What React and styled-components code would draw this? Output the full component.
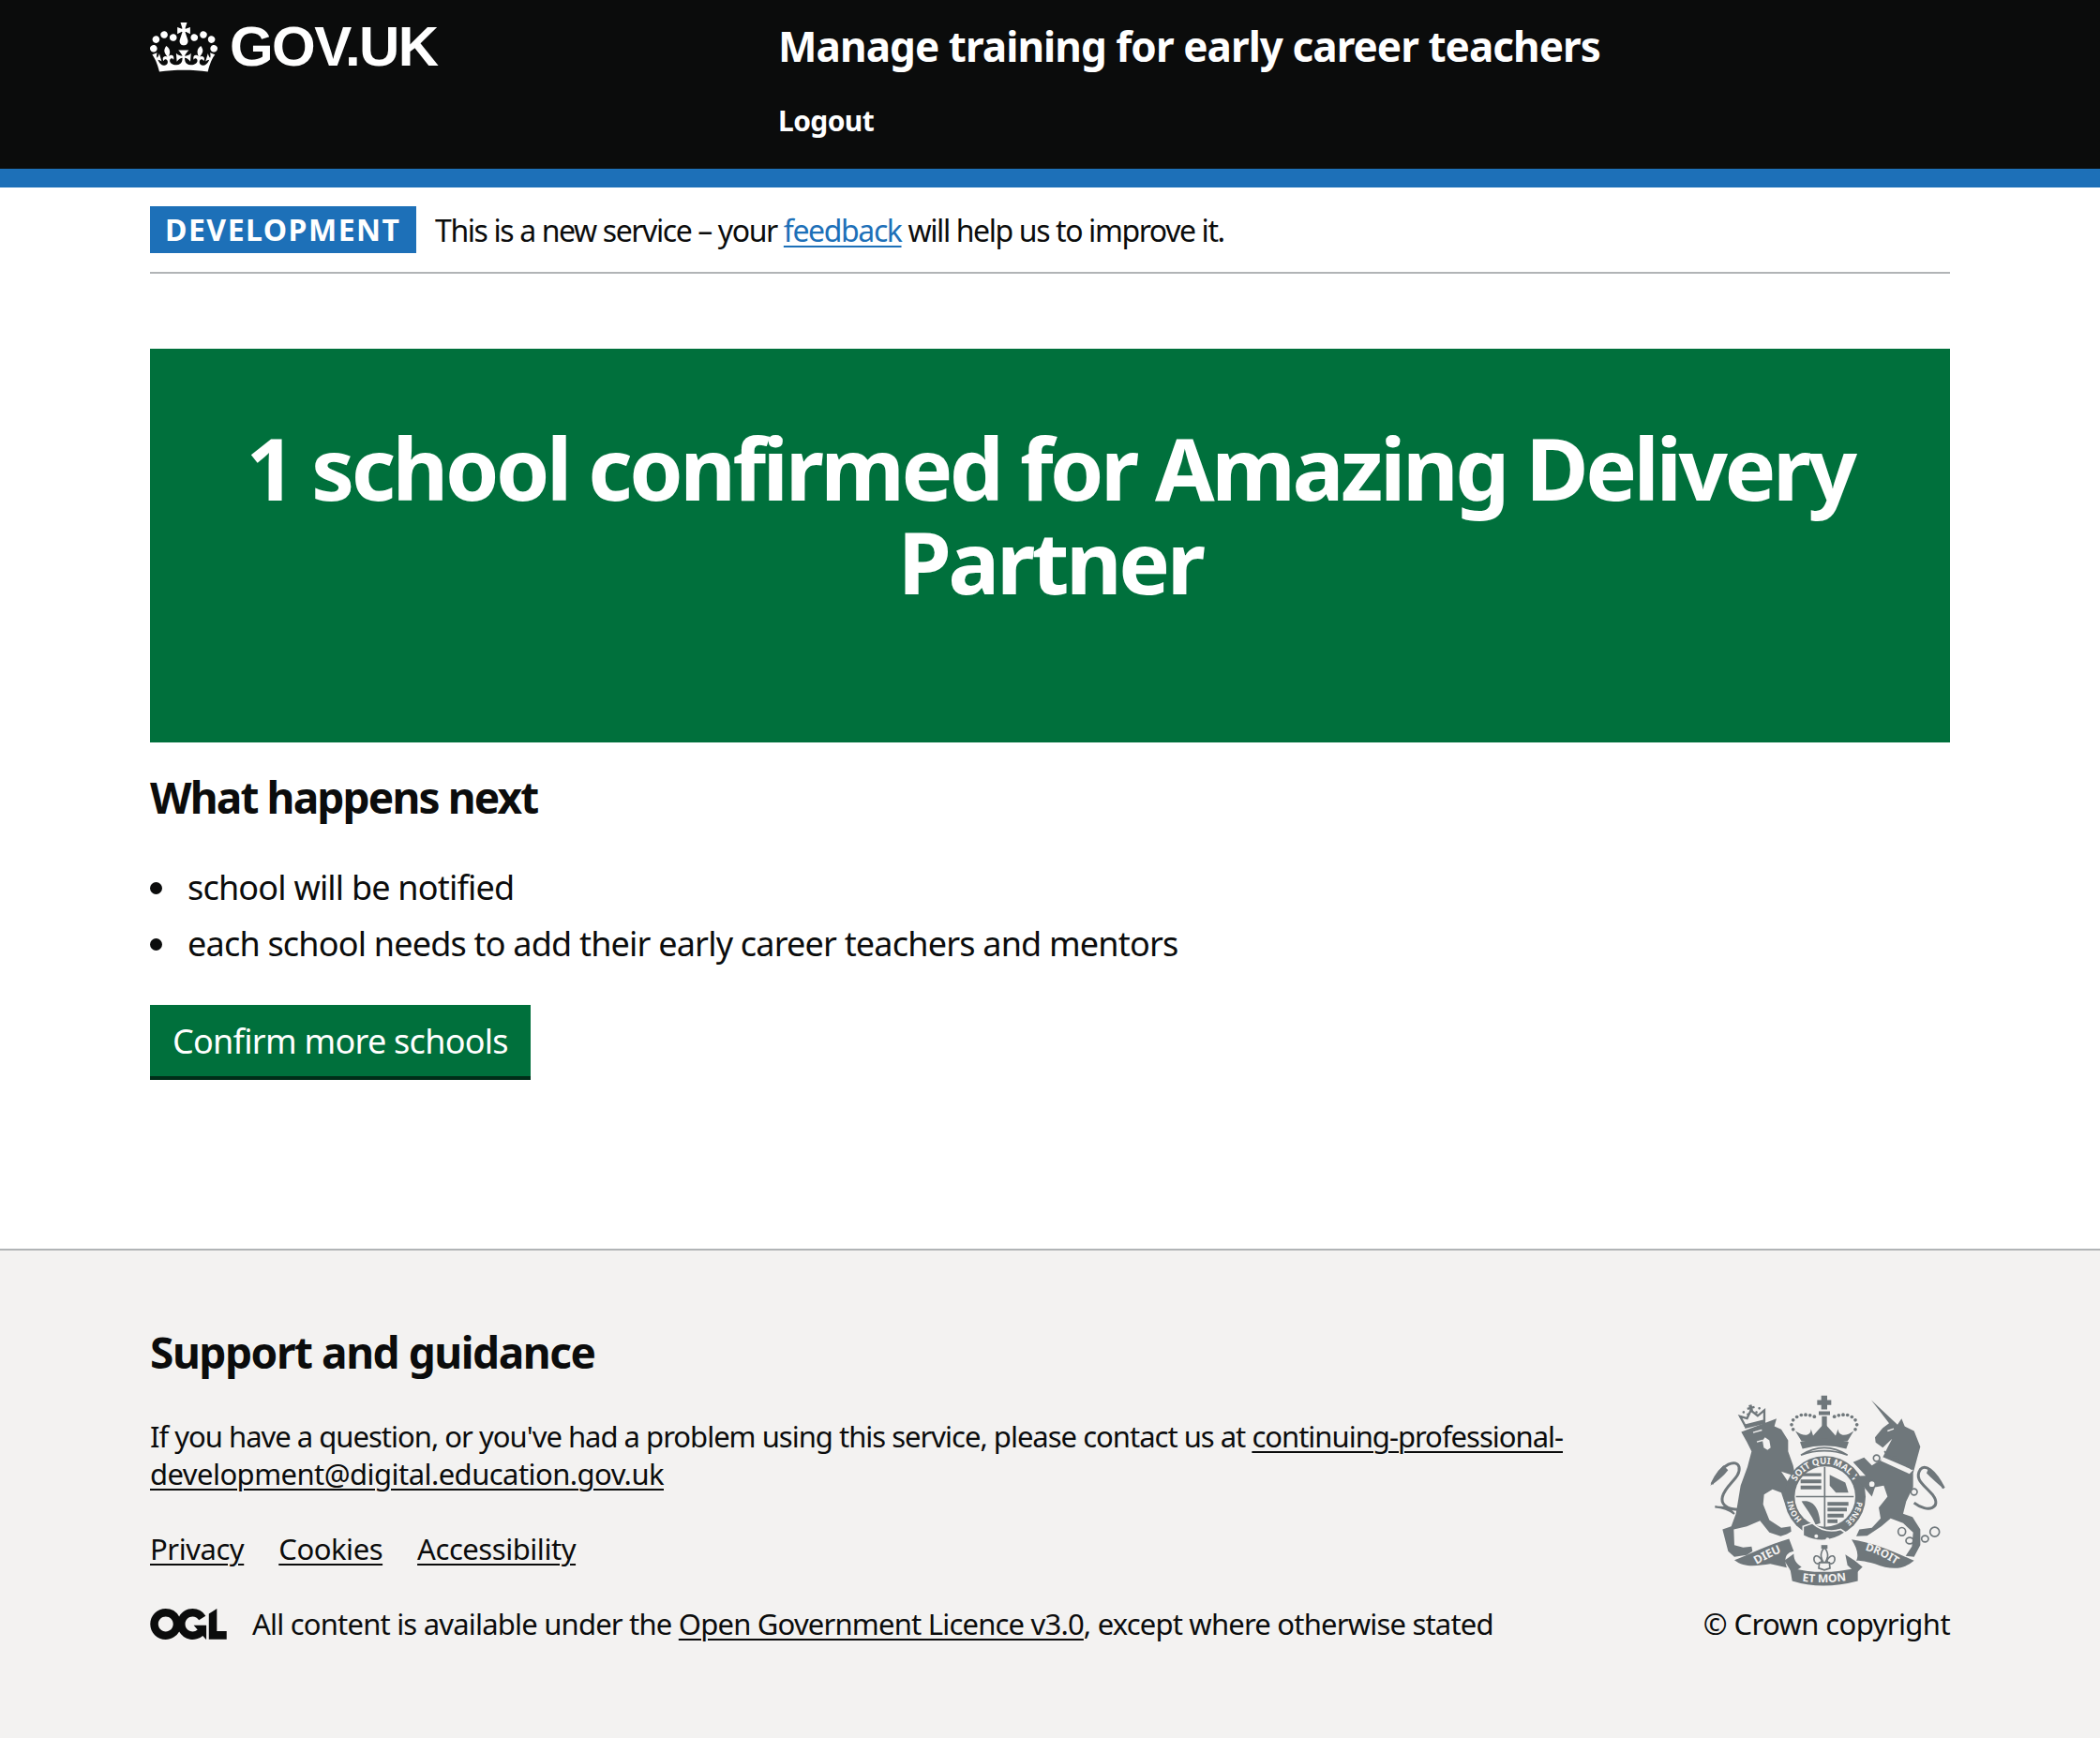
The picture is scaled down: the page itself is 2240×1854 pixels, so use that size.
import React from "react";
import styled, { createGlobalStyle } from "styled-components";

const FONT = '"Noto Sans", "Liberation Sans", Arial, sans-serif';
const Global = createGlobalStyle`
  html, body { margin: 0; padding: 0; background: #fff; }
  body { font-family: ${FONT}; color: #0b0c0c; }
  * { box-sizing: border-box; }
`;
const Page = styled.div`display: flex; flex-direction: column; min-height: 1854px;`;
const Container = styled.div`width: 1920px; margin: 0 auto;`;
const Header = styled.header`background: #0b0c0c; border-bottom: 20px solid #1d70b8; height: 200px; color: #fff;`;
const HeaderInner = styled(Container)`display: flex;`;
const LogoCol = styled.div`width: 670px; display: flex; align-items: center; gap: 13px; height: 100px; align-self: flex-start;`;
const Wordmark = styled.span`font: 700 60px/100px "Liberation Sans", Arial, sans-serif; letter-spacing: -1.6px;`;
const Crown = styled.svg`width: 72px; height: 53px; fill: #fff; flex: none;`;
const HeaderContent = styled.div`display: flex; flex-direction: column;`;
const ServiceName = styled.div`font-weight: 700; font-size: 44px; line-height: 99px; letter-spacing: -0.94px;`;
const HeaderLink = styled.a`font-weight: 700; font-size: 30px; line-height: 60px; letter-spacing: -0.6px; color: #fff;`;
const Banner = styled(Container)`display: flex; align-items: center; gap: 20px; height: 92px; border-bottom: 2px solid #b1b4b6;`;
const Tag = styled.strong`background: #1d70b8; color: #fff; font-weight: 700; font-size: 32px; line-height: 50px; height: 50px; padding: 0 16px; letter-spacing: 1.5px; width: 284px; white-space: nowrap;`;
const BannerText = styled.span`font-size: 32px; letter-spacing: -1.4px;`;
const BlueLink = styled.a`color: #1d70b8; text-decoration: underline; text-decoration-thickness: 2px; text-underline-offset: 4px;`;
const Main = styled(Container)`padding-top: 80px; flex: 1;`;
const Panel = styled.div`background: #00703c; color: #fff; height: 420px; padding: 77px 40px 0; text-align: center;`;
const PanelTitle = styled.h1`margin: 0; font-size: 92px; line-height: 100px; font-weight: 700; letter-spacing: -3.5px;`;
const H2 = styled.h2`margin: 28px 0 0; font-size: 46px; line-height: 60px; font-weight: 700; letter-spacing: -1.85px;`;
const List = styled.ul`margin: 37px 0 0; padding: 0 0 0 40px; list-style: none;`;
const Item = styled.li`
  position: relative; font-size: 36px; line-height: 60px; letter-spacing: -0.8px;
  &::before { content: ""; position: absolute; left: -40px; top: 24px; width: 13px; height: 13px; border-radius: 50%; background: #0b0c0c; }
`;
const Button = styled.a`display: inline-block; margin-top: 35px; background: #00703c; color: #fff; box-shadow: 0 4px 0 #002d18; height: 76px; width: 406px; padding-left: 24px; font-size: 36px; line-height: 78px; letter-spacing: -0.73px;`;
const Footer = styled.footer`background: #f3f2f1; border-top: 2px solid #b1b4b6; height: 522px; padding-top: 78px;`;
const FooterInner = styled(Container)`display: grid; grid-template-columns: 1fr auto; column-gap: 100px;`;
const FooterMain = styled.div`display: flex; flex-direction: column;`;
const FooterTitle = styled.h2`margin: 0 0 40px; font-size: 46px; line-height: 60px; font-weight: 700; letter-spacing: -1.45px;`;
const FooterText = styled.p`margin: 0 0 40px; font-size: 31px; line-height: 40px; letter-spacing: -1px;`;
const DarkLink = styled.a`color: #0b0c0c; text-decoration: underline; text-decoration-thickness: 2px; text-underline-offset: 4px;`;
const WideRun = styled.span`letter-spacing: -0.55px;`;
const FooterLinks = styled.div`display: flex; gap: 37px; font-size: 31px; line-height: 40px; letter-spacing: -0.45px;`;
const Licence = styled.div`display: flex; align-items: center; gap: 27px; margin-top: 40px; font-size: 31px; line-height: 40px; letter-spacing: -0.8px;`;
const Ogl = styled.svg`width: 82px; height: 33px; fill: #0b0c0c; flex: none;`;
const FooterSide = styled.div`display: flex; flex-direction: column; align-items: flex-end; padding-top: 76px;`;
const CrestSvg = styled.svg`width: 260px; height: 207px; display: block; margin-bottom: 17px;`;
const Copy = styled.div`font-size: 31px; line-height: 40px; letter-spacing: -0.6px;`;

const C = "#6f777b";
const BG = "#f3f2f1";
const CrestLabel = ({ id, d, size = 30, fill = BG, children, offset = "50%" }) => (
  <>
    <path id={id} d={d} fill="none" />
    <text fontFamily="Noto Sans, sans-serif" fontWeight="700" fontSize={size} fill={fill} textAnchor="middle">
      <textPath href={`#${id}`} startOffset={offset}>{children}</textPath>
    </text>
  </>
);

const Crest = () => (
  <CrestSvg viewBox="60 60 780 620" role="img" aria-label="Royal coat of arms">
    {/* lion tail */}
    <path d="M215 405C180 440 100 430 112 385C122 345 172 325 165 290C158 265 110 275 78 345" fill="none" stroke={C} strokeWidth="9" />
    <path d="M115 285C95 305 85 325 73 350C95 335 115 320 130 300Z" fill={C} />
    <path d="M88 418C110 420 130 425 150 440L130 420Z" fill={C} stroke={C} strokeWidth="6" />
    {/* lion */}
    <path fill={C} d="M172 178L285 135L278 160L300 170L322 205L322 240L338 285L345 320L300 305L330 350L345 395L335 425L312 408L300 372L272 362L245 378L242 410L262 460L300 485L330 480L332 497L318 505L298 512L262 500L232 462L190 480L148 490L150 540L178 548L205 545L208 560L190 572L150 578L130 560L112 490L140 480L155 440L170 350L192 290L205 240L190 210Z" />
    <path fill={BG} d="M248 195L262 205L266 228L256 236L244 228L240 205Z" />
    <path fill="none" stroke={BG} strokeWidth="4" d="M210 180L238 172M222 210L240 205" />
    {/* lion crown */}
    <g transform="rotate(-14 210 130)">
      <path d="M178 150L170 118L190 130L208 108L225 130L250 118L242 150Z" fill="none" stroke={C} strokeWidth="7" />
      <path d="M176 150H244V160H176Z" fill={C} />
      <path d="M205 90H215V110H205ZM198 97H222V104H198Z" fill={C} />
      <g fill={C}>
        <circle cx="172" cy="120" r="4" /><circle cx="184" cy="108" r="4" /><circle cx="196" cy="118" r="4" /><circle cx="224" cy="118" r="4" /><circle cx="236" cy="108" r="4" /><circle cx="248" cy="120" r="4" />
      </g>
    </g>
    {/* main crown */}
    <g fill={C}>
      <path d="M428 62H447V76H460V92H447V106H428V92H415V76H428Z" />
      <path d="M420 112H456V124H420Z" />
      <path d="M430 128H446V172H430Z" />
      <path d="M365 208L345 175C375 195 395 190 395 168L402 190L420 170L438 150L456 170L474 190L482 168C482 190 505 195 532 175L512 208Z" />
      <path d="M360 210Q438 190 516 210L508 232Q438 212 368 232Z" />
      {[[338,170],[333,155],[338,140],[350,130],[364,124],[378,123],[392,125],[406,129],[470,129],[484,125],[498,123],[512,124],[526,130],[537,140],[542,155],[537,170]].map(([x,y]) => <circle key={x} cx={x} cy={y} r="5.5" />)}
    </g>
    <path d="M363 252Q438 205 512 252Q438 225 363 252Z" fill="none" stroke={C} strokeWidth="5" />
    {/* garter */}
    <circle cx="440" cy="385" r="130" fill={C} />
    <circle cx="440" cy="385" r="97" fill={BG} />
    <g stroke={C} strokeWidth="5"><path d="M439 290V488M347 385H532" /></g>
    <g fill={C}>
      <path d="M368 310H428V320H368ZM362 330H428V342H362ZM362 350H428V362H362Z" />
      <path d="M455 315L505 340L515 372H475L455 350Z" />
      <path d="M448 402H515V414H448ZM448 420H510V432H448ZM448 440H500V452H448ZM448 458H480V470H448Z" />
      <path d="M365 400C395 395 420 410 425 470L410 475C395 440 380 425 365 400Z" />
    </g>
    <CrestLabel id="gar1" d="M336 385A104 104 0 0 1 544 385" size="29">SOIT QUI MAL Y</CrestLabel>
    <CrestLabel id="gar2" d="M544 385A104 104 0 0 1 492 475" size="25">PENSE</CrestLabel>
    <CrestLabel id="gar3" d="M375 466A104 104 0 0 1 336 385" size="25">HONI</CrestLabel>
    {/* buckle */}
    <path d="M370 480L400 470Q440 505 490 490L505 500Q440 545 370 510Z" fill={C} stroke={BG} strokeWidth="5" />
    <circle cx="412" cy="512" r="6" fill={BG} /><circle cx="448" cy="522" r="6" fill={BG} />
    {/* unicorn */}
    <path fill={C} d="M588 76L648 132L672 155L685 135L695 160L725 175L745 225L735 262L722 310L722 355L700 400L690 440L720 450L745 490L745 540L725 578L698 575L718 545L722 500L690 470L650 455L620 480L575 510L540 512L550 490L590 485L618 455L612 420L640 385L628 350L600 355L590 385L565 355L530 320L570 318L530 275L565 260L590 285L622 265L640 228L655 200L625 228L602 212L600 195L625 165L645 150Z" />
    <path fill={BG} d="M625 258L722 300L710 312L618 270Z" />
    <path fill="none" stroke={C} strokeWidth="5" d="M630 240L650 262L666 258L680 275L695 272L715 295L722 265" />
    <circle cx="605" cy="262" r="10" fill={BG} stroke={C} strokeWidth="5" />
    <circle cx="590" cy="345" r="11" fill={BG} stroke={C} strokeWidth="5" />
    <circle cx="725" cy="370" r="10" fill={BG} stroke={C} strokeWidth="5" />
    <circle cx="717" cy="415" r="7" fill={BG} /><circle cx="700" cy="432" r="5" fill={BG} />
    <path d="M640 175L660 168" stroke={BG} strokeWidth="4" />
    {/* unicorn tail */}
    <path d="M725 405C770 440 815 420 785 380C755 345 725 330 745 298C760 280 790 300 820 358" fill="none" stroke={C} strokeWidth="9" />
    <path d="M772 292C790 310 810 335 822 360C800 345 780 325 765 310Z" fill={C} />
    {/* chain */}
    <g fill="none" stroke={C} strokeWidth="5">
      <ellipse cx="686" cy="497" rx="12" ry="13" /><ellipse cx="711" cy="526" rx="12" ry="10" /><ellipse cx="760" cy="520" rx="11" ry="10" /><circle cx="791" cy="498" r="15" />
    </g>
    {/* fleur de lys */}
    <g fill={BG} stroke={C} strokeWidth="5">
      <path d="M438 548C420 570 428 585 438 600C448 585 456 570 438 548Z" />
      <path d="M430 590C415 565 400 575 406 592C412 605 425 600 430 590ZM446 590C461 565 476 575 470 592C464 605 451 600 446 590Z" />
      <path d="M422 596H454L456 614L438 620L420 614Z" />
    </g>
    <path d="M428 540H448V552H428Z" fill={C} />
    {/* motto */}
    <path fill={C} d="M150 588C200 570 255 540 325 520L340 560C310 565 310 590 318 612L265 600C225 605 185 615 150 588Z" />
    <path fill={C} d="M310 590L340 568C340 590 350 600 365 610L335 630Z" />
    <path fill={C} d="M328 612Q430 640 545 612L545 655Q430 685 335 655Z" />
    <path fill={C} d="M505 570L535 590L560 610L540 630L512 605Z" />
    <path fill={C} d="M525 522C590 530 670 565 725 590C690 620 650 620 600 600C560 590 550 590 540 590C550 570 540 545 525 522Z" />
    <CrestLabel id="m1" d="M205 612Q260 578 318 556" size="37">DIEU</CrestLabel>
    <CrestLabel id="m2" d="M345 652Q435 668 530 650" size="36">ET MON</CrestLabel>
    <CrestLabel id="m3" d="M552 552Q620 568 680 612" size="35">DROIT</CrestLabel>
  </CrestSvg>
);

export default function App() {
  return (
    <Page>
      <Global />
      <Header>
        <HeaderInner>
          <LogoCol>
            <Crown viewBox="0 0 132 97" aria-hidden="true">
              <path d="M25 30.2c3.5 1.5 7.7-.2 9.1-3.7 1.5-3.6-.2-7.8-3.9-9.2-3.6-1.4-7.6.3-9.1 3.9-1.4 3.5.3 7.5 3.9 9zM9 39.5c3.6 1.5 7.8-.2 9.2-3.7 1.5-3.6-.2-7.8-3.9-9.1-3.6-1.5-7.6.2-9.1 3.8-1.4 3.5.3 7.5 3.8 9zM4.4 57.2c3.5 1.5 7.7-.2 9.1-3.8 1.5-3.6-.2-7.7-3.9-9.1-3.5-1.5-7.6.3-9.1 3.8-1.4 3.5.3 7.6 3.9 9.1zm38.3-21.4c3.5 1.5 7.7-.2 9.1-3.8 1.5-3.6-.2-7.7-3.9-9.1-3.6-1.5-7.6.3-9.1 3.8-1.3 3.6.4 7.7 3.9 9.1zm64.4-5.6c-3.6 1.5-7.8-.2-9.1-3.7-1.5-3.6.2-7.8 3.8-9.2 3.6-1.4 7.7.3 9.2 3.9 1.3 3.5-.4 7.5-3.9 9zm15.9 9.3c-3.6 1.5-7.7-.2-9.1-3.7-1.5-3.6.2-7.8 3.7-9.1 3.6-1.5 7.7.2 9.2 3.8 1.5 3.5-.3 7.5-3.8 9zm4.7 17.7c-3.6 1.5-7.8-.2-9.2-3.8-1.5-3.6.2-7.7 3.9-9.1 3.6-1.5 7.7.3 9.2 3.8 1.3 3.5-.4 7.6-3.9 9.1zM89.3 35.8c-3.6 1.5-7.8-.2-9.2-3.8-1.4-3.6.2-7.7 3.9-9.1 3.6-1.5 7.7.3 9.2 3.8 1.4 3.6-.3 7.7-3.9 9.1zM69.7 17.7l8.9 4.7V9.3l-8.9 2.8c-.2-.3-.5-.6-.9-.9L72.4 0H59.6l3.6 11.2c-.3.3-.6.5-.9.9l-8.8-2.8v13.1l8.8-4.7c.3.3.6.7.9.9l-5 15.4v.1c-.2.8-.4 1.6-.4 2.4 0 4.1 3.1 7.5 7 8.1h.2c.3 0 .7.1 1 .1.4 0 .7 0 1-.1h.2c4-.6 7.1-4.1 7.1-8.1 0-.8-.1-1.7-.4-2.4V34l-5.1-15.4c.4-.2.7-.6 1-.9zM66 92.8c16.9 0 32.8 1.1 47.1 3.2 4-16.9 8.9-26.7 14-33.5l-9.6-3.4c1 4.9 1.1 7.2 0 10.2-1.5-1.4-3-4.3-4.2-8.7L108.6 76c2.8-2 5-3.2 7.5-3.3-4.4 9.4-10 11.9-13.6 11.2-4.3-.8-6.3-4.6-5.6-7.9 1-4.7 5.7-5.9 8-.5 4.3-8.7-3-11.4-7.6-8.8 7.1-7.2 7.9-13.5 2.1-21.1-8 6.1-8.1 12.3-4.5 20.8-4.7-5.4-12.1-2.5-9.5 6.2 3.4-5.2 7.9-2 7.2 3.1-.6 4.3-6.4 7.8-13.5 7.2-10.3-.9-10.9-8-11.2-13.8 2.5-.5 7.1 1.8 11 7.3L80.2 60c-4.1 4.4-8 5.3-12.3 5.4 1.4-4.4 8-11.6 8-11.6H55.5s6.4 7.2 7.9 11.6c-4.2-.1-8-1-12.3-5.4l1.4 16.4c3.9-5.5 8.5-7.7 10.9-7.3-.3 5.8-.9 12.8-11.1 13.8-7.2.6-12.9-2.9-13.5-7.2-.7-5 3.8-8.3 7.1-3.1 2.7-8.7-4.6-11.6-9.4-6.2 3.7-8.5 3.6-14.7-4.6-20.8-5.8 7.6-5 13.9 2.2 21.1-4.7-2.6-11.9.1-7.7 8.8 2.3-5.5 7.1-4.2 8.1.5.7 3.3-1.3 7.1-5.7 7.9-3.5.7-9-1.8-13.5-11.2 2.5.1 4.7 1.3 7.5 3.3l-4.7-15.4c-1.2 4.4-2.7 7.2-4.3 8.7-1.1-3-.9-5.3 0-10.2l-9.5 3.4c5 6.9 9.9 16.7 14 33.5 14.8-2.1 30.8-3.2 47.7-3.2z" />
            </Crown>
            <Wordmark>GOV.UK</Wordmark>
          </LogoCol>
          <HeaderContent>
            <ServiceName>Manage training for early career teachers</ServiceName>
            <HeaderLink>Logout</HeaderLink>
          </HeaderContent>
        </HeaderInner>
      </Header>
      <Banner>
        <Tag>DEVELOPMENT</Tag>
        <BannerText>This is a new service – your <BlueLink>feedback</BlueLink> will help us to improve it.</BannerText>
      </Banner>
      <Main>
        <Panel>
          <PanelTitle>1 school confirmed for Amazing Delivery Partner</PanelTitle>
        </Panel>
        <H2>What happens next</H2>
        <List>
          <Item>school will be notified</Item>
          <Item>each school needs to add their early career teachers and mentors</Item>
        </List>
        <Button>Confirm more schools</Button>
      </Main>
      <Footer>
        <FooterInner>
          <FooterMain>
            <FooterTitle>Support and guidance</FooterTitle>
            <FooterText>If you have a question, or you've had a problem using this service, please contact us at <DarkLink>continuing-professional-<WideRun>development@digital.education.gov.uk</WideRun></DarkLink></FooterText>
            <FooterLinks>
              <DarkLink>Privacy</DarkLink>
              <DarkLink>Cookies</DarkLink>
              <DarkLink>Accessibility</DarkLink>
            </FooterLinks>
            <Licence>
              <Ogl viewBox="0 0 483.2 195.7" aria-hidden="true">
                <path d="M421.5 142.8V.1l-50.7 32.3v161.1h112.4v-50.7zm-122.3-9.6A47.12 47.12 0 0 1 221 97.8c0-26 21.1-47.1 47.1-47.1 16.7 0 31.4 8.7 39.7 21.8l42.7-27.2A97.63 97.63 0 0 0 268.1 0c-36.5 0-68.3 20.1-85.1 49.7A98 98 0 0 0 97.8 0C43.9 0 0 43.9 0 97.8s43.9 97.8 97.8 97.8c36.5 0 68.3-20.1 85.1-49.7a97.76 97.76 0 0 0 149.6 25.4l19.4 22.2h3v-87.8h-80l24.3 27.5zM97.8 145c-26 0-47.1-21.1-47.1-47.1s21.1-47.1 47.1-47.1 47.2 21 47.2 47S123.8 145 97.8 145" />
              </Ogl>
              <span>All content is available under the <DarkLink>Open Government Licence v3.0</DarkLink>, except where otherwise stated</span>
            </Licence>
          </FooterMain>
          <FooterSide>
            <Crest />
            <Copy>© Crown copyright</Copy>
          </FooterSide>
        </FooterInner>
      </Footer>
    </Page>
  );
}
